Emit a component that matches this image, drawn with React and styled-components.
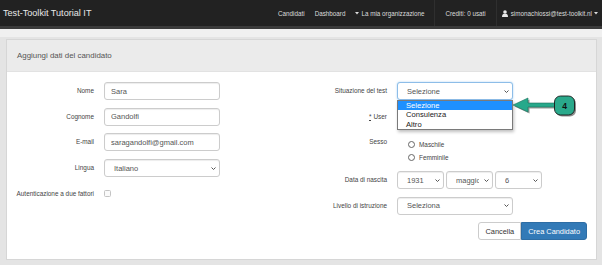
import React from "react";
import styled, { createGlobalStyle } from "styled-components";

const GlobalStyle = createGlobalStyle`
  html, body { margin: 0; padding: 0; }
  body {
    background: #e4e4e4;
    font-family: "Liberation Sans", Arial, sans-serif;
  }
  * { box-sizing: border-box; }
`;

const Navbar = styled.header`
  height: 29px;
  background: #222;
  border-bottom: 3px solid #3b3b3b;
  display: flex;
  align-items: center;
  padding: 0 4px 0 3px;
`;

const Brand = styled.div`
  font-size: 9.1px;
  color: #e8e8e8;
  white-space: nowrap;
`;

const NavRight = styled.nav`
  margin-left: auto;
  display: flex;
  align-items: center;
  align-self: stretch;
`;

const NavLink = styled.span`
  font-size: 6.3px;
  color: #dcdcdc;
  padding: 0 ${(p) => p.$pad ?? 5}px;
  display: flex;
  align-items: center;
  gap: 2px;
  white-space: nowrap;
`;

const NavDivider = styled.span`
  width: 1px;
  align-self: stretch;
  background: #2f2f2f;
  margin: 0 5px;
`;

const Caret = styled.svg`
  width: 4px;
  height: 3px;
  fill: #dcdcdc;
`;

const Page = styled.main`
  background: #f0f0f0;
  padding-top: 8px;
`;

const Frame = styled.div`
  background: #e4e4e4;
  padding: 2px 5px 4px 6px;
`;

const Panel = styled.section`
  background: #fff;
  border: 1px solid #d6d6d6;
`;

const PanelHeading = styled.div`
  height: 32px;
  background: #ebebeb;
  border-bottom: 1px solid #e2e2e2;
  padding-left: 10px;
  display: flex;
  align-items: center;
  font-size: 7.9px;
  color: #555;
`;

const PanelBody = styled.div`
  padding: 10px 9px 19px 0;
  display: grid;
  grid-template-columns: 293px 1fr;
`;

const FormColumn = styled.div`
  display: grid;
  grid-template-columns: 87px 116px 1fr;
  column-gap: 10px;
  row-gap: 7.7px;
  align-content: start;
`;

const Label = styled.label`
  grid-column: 1;
  font-size: 6.4px;
  line-height: 8px;
  padding-top: 5px;
  color: #444;
  text-align: right;
  white-space: nowrap;
`;

const Req = styled.abbr`
  text-decoration: underline dotted;
  margin-right: 2px;
`;

const Control = styled.div`
  grid-column: ${(p) => (p.$wide ? "2 / -1" : "2")};
  position: relative;
`;

const TextInput = styled.input`
  display: block;
  width: 100%;
  height: 18px;
  border: 1px solid #ccc;
  border-radius: 3px;
  padding: 0 6px;
  font-family: inherit;
  font-size: 7.5px;
  color: #555;
  background: #fff;
  box-shadow: inset 0 1px 1px rgba(0, 0, 0, 0.075);
  outline: none;
`;

const SelectBox = styled.div`
  width: ${(p) => (p.$w ? `${p.$w}px` : "100%")};
  height: ${(p) => p.$h ?? 18}px;
  border: 1px solid ${(p) => (p.$focus ? "#8dbde8" : "#ccc")};
  border-radius: 3px;
  padding: 0 3px 0 9px;
  display: flex;
  align-items: center;
  gap: 5px;
  font-size: 7.5px;
  color: #555;
  background: #fff;
  box-shadow: ${(p) =>
    p.$focus
      ? "0 0 2px rgba(102, 175, 233, 0.6)"
      : "inset 0 1px 1px rgba(0, 0, 0, 0.075)"};
`;

const SelectText = styled.span`
  flex: 1;
  overflow: hidden;
  white-space: nowrap;
`;

const Chevron = styled.svg`
  flex: none;
  width: 5px;
  height: 3px;
  fill: none;
  stroke: #555;
  stroke-width: 1;
`;

const DateRow = styled.div`
  display: flex;
  gap: 2px;
`;

const Dropdown = styled.ul`
  position: absolute;
  top: 100%;
  left: 0;
  right: 0;
  margin: 0;
  padding: 0;
  list-style: none;
  background: #fff;
  border: 1px solid #7a7a7a;
  box-shadow: 1px 2px 3px rgba(0, 0, 0, 0.25);
  z-index: 2;
`;

const DropItem = styled.li`
  height: 9.3px;
  line-height: 9.3px;
  font-size: 7.6px;
  padding-left: 8px;
  color: ${(p) => (p.$active ? "#fff" : "#222")};
  background: ${(p) => (p.$active ? "#1e90ff" : "transparent")};
`;

const Annotation = styled.svg`
  position: absolute;
  left: 116px;
  top: 13px;
  width: 64px;
  height: 23px;
  overflow: visible;
  z-index: 3;
`;

const RadioGroup = styled.div`
  grid-column: 2;
  padding-top: 5px;
  display: flex;
  flex-direction: column;
`;

const RadioItem = styled.div`
  height: 12.5px;
  display: flex;
  align-items: center;
  gap: 4px;
  padding-left: 11px;
  font-size: 6.4px;
  color: #444;
`;

const RadioCircle = styled.span`
  width: 7px;
  height: 7px;
  border: 1px solid #666;
  border-radius: 50%;
  background: #fff;
`;

const Checkbox = styled.span`
  grid-column: 2;
  width: 7px;
  height: 7px;
  margin-top: 5px;
  border: 1px solid #c4c4c4;
  border-radius: 1.5px;
  background: #fafafa;
`;

const ButtonRow = styled.div`
  grid-column: 1 / -1;
  display: flex;
  justify-content: flex-end;
`;

const Button = styled.button`
  height: 18px;
  padding: 0 6px;
  font-family: inherit;
  font-size: 7.4px;
  border: 1px solid ${(p) => (p.$primary ? "#2e6da4" : "#ccc")};
  background: ${(p) => (p.$primary ? "#337ab7" : "#fff")};
  color: ${(p) => (p.$primary ? "#fff" : "#333")};
  border-radius: ${(p) => (p.$primary ? "0 3px 3px 0" : "3px 0 0 3px")};
`;

const ChevronIcon = () => (
  <Chevron viewBox="0 0 5 3">
    <path d="M0.5 0.5 L2.5 2.5 L4.5 0.5" />
  </Chevron>
);

const Select = ({ value, ...rest }) => (
  <SelectBox {...rest}>
    <SelectText>{value}</SelectText>
    <ChevronIcon />
  </SelectBox>
);

const CaretIcon = () => (
  <Caret viewBox="0 0 4 3">
    <path d="M0 0 H4 L2 2.5 Z" />
  </Caret>
);

const UserIcon = () => (
  <svg width="6" height="7" viewBox="0 0 6 7" style={{ marginRight: 1 }}>
    <circle cx="3" cy="2" r="1.8" fill="#e8e8e8" />
    <path d="M0 7 C0 4.3 1.3 3.8 3 3.8 C4.7 3.8 6 4.3 6 7 Z" fill="#e8e8e8" />
  </svg>
);

export default function App() {
  return (
    <>
      <GlobalStyle />
      <Navbar>
        <Brand>Test-Toolkit Tutorial IT</Brand>
        <NavRight>
          <NavLink>Candidati</NavLink>
          <NavLink>Dashboard</NavLink>
          <NavLink>
            <CaretIcon />
            La mia organizzazione
          </NavLink>
          <NavDivider />
          <NavLink>Crediti: 0 usati</NavLink>
          <NavDivider />
          <NavLink $pad={0}>
            <UserIcon />
            simonachiossi@test-toolkit.nl
            <CaretIcon />
          </NavLink>
        </NavRight>
      </Navbar>
      <Page>
        <Frame>
          <Panel>
            <PanelHeading>Aggiungi dati del candidato</PanelHeading>
            <PanelBody>
              <FormColumn>
                <Label>Nome</Label>
                <Control>
                  <TextInput defaultValue="Sara" />
                </Control>
                <Label>Cognome</Label>
                <Control>
                  <TextInput defaultValue="Gandolfi" />
                </Control>
                <Label>E-mail</Label>
                <Control>
                  <TextInput defaultValue="saragandolfi@gmail.com" />
                </Control>
                <Label>Lingua</Label>
                <Control>
                  <Select value="Italiano" />
                </Control>
                <Label>Autenticazione a due fattori</Label>
                <Checkbox />
              </FormColumn>
              <FormColumn>
                <Label>Situazione del test</Label>
                <Control>
                  <Select value="Selezione" $focus />
                  <Dropdown>
                    <DropItem $active>Selezione</DropItem>
                    <DropItem>Consulenza</DropItem>
                    <DropItem>Altro</DropItem>
                  </Dropdown>
                  <Annotation viewBox="0 0 64 23">
                    <path
                      d="M1.5 11.5 L16.5 4.5 L16.5 9.5 L43 9.5 L43 13.5 L16.5 13.5 L16.5 18.5 Z"
                      fill="#3a4a44"
                      opacity="0.55"
                    />
                    <path
                      d="M0 10 L15 3 L15 8 L42 8 L42 12 L15 12 L15 17 Z"
                      fill="#27a98b"
                      stroke="#1b6e5a"
                      strokeWidth="0.6"
                    />
                    <rect x="43" y="2.5" width="20" height="19" rx="6" fill="#333" opacity="0.55" />
                    <rect x="41.5" y="1" width="20" height="19" rx="6" fill="#2aa98b" stroke="#1a1a1a" strokeWidth="0.9" />
                    <text
                      x="51.5"
                      y="13.8"
                      textAnchor="middle"
                      fontSize="8.5"
                      fontWeight="bold"
                      fontFamily="Liberation Sans, Arial, sans-serif"
                      fill="#111"
                    >
                      4
                    </text>
                  </Annotation>
                </Control>
                <Label>
                  <Req>*</Req>User
                </Label>
                <Control>
                  <TextInput defaultValue="" />
                </Control>
                <Label>Sesso</Label>
                <RadioGroup>
                  <RadioItem>
                    <RadioCircle />
                    Maschile
                  </RadioItem>
                  <RadioItem>
                    <RadioCircle />
                    Femminile
                  </RadioItem>
                </RadioGroup>
                <Label>Data di nascita</Label>
                <Control $wide>
                  <DateRow>
                    <Select value="1931" $w={47} />
                    <Select value="maggio" $w={47} />
                    <Select value="6" $w={47} />
                  </DateRow>
                </Control>
                <Label>Livello di istruzione</Label>
                <Control>
                  <Select value="Seleziona" />
                </Control>
                <ButtonRow>
                  <Button>Cancella</Button>
                  <Button $primary>Crea Candidato</Button>
                </ButtonRow>
              </FormColumn>
            </PanelBody>
          </Panel>
        </Frame>
      </Page>
    </>
  );
}
